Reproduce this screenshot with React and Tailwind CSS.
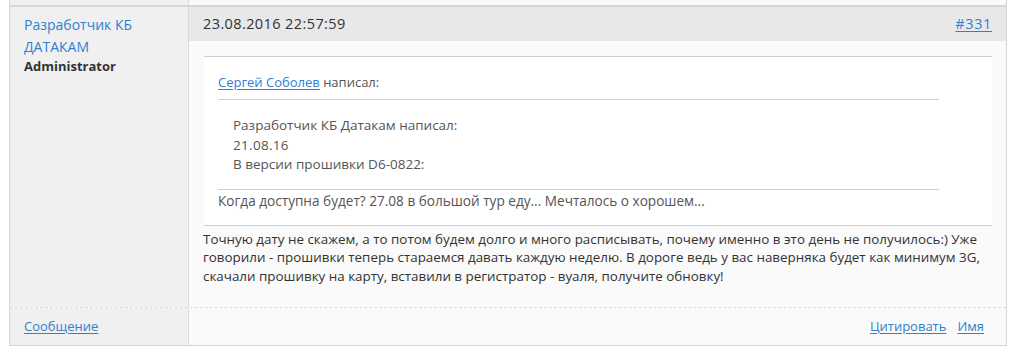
export default function App() {
  const link = 'text-[#2f80d1] underline underline-offset-2';
  return (
    <div className="w-[1016px] h-[346px] overflow-hidden bg-white pl-[9px] font-['Open_Sans',sans-serif] text-[13.4px] text-[#333]">
      <div className="w-[998px] border-x border-b border-[#d6d6d6]">
        {/* tail of previous post */}
        <div className="flex h-[7px] border-b-2 border-[#d6d6d6]">
          <div className="w-[179px] border-r border-[#dcdcdc] bg-[#f0f0f0]" />
          <div className="flex-1 bg-[#fafafa]" />
        </div>

        {/* post */}
        <div className="flex">
          <div className="w-[179px] border-r border-[#dcdcdc] bg-[#f0f0f0] px-[14px] pt-[7px]">
            <div className="text-[14px] leading-[22px] text-[#2f80d1]">
              Разработчик КБ ДАТАКАМ
            </div>
            <div className="-mt-[1px] text-[13px] font-bold text-[#333]">Administrator</div>
          </div>

          <div className="flex-1 bg-[#fafafa]">
            <div className="flex h-[34px] items-center justify-between bg-[#e8e8e8] px-[14px]">
              <span className="text-[14.5px] tracking-[0.4px] text-[#333]">23.08.2016 22:57:59</span>
              <a className={`${link} text-[14.5px] tracking-[0.6px]`}>#331</a>
            </div>

            <div className="px-[14px] pt-[15px] pb-[6px]">
              <div className="ml-px border-y border-[#cfcfcf] bg-white pl-[14px]">
                <div className="pt-[16px] pb-[8px] text-[13px] leading-[18px] text-[#555]">
                  <a className={link}>Сергей Соболев</a> написал:
                </div>
                <div className="mr-[53px] border-y border-[#cfcfcf] pl-[15px] pt-[16px] pb-[14px] text-[13.5px] leading-[19.5px] text-[#555]">
                  <div>Разработчик КБ Датакам написал:</div>
                  <div className="tracking-[0.3px]">21.08.16</div>
                  <div>В версии прошивки D6-0822:</div>
                </div>
                <div className="pt-[2px] pb-[15px] text-[13.6px] leading-[18px] text-[#555]">
                  Когда доступна будет? 27.08 в большой тур еду... Мечталось о хорошем...
                </div>
              </div>
              <p className="mt-[4px] pb-[16px] leading-[18.5px] text-[#333]">
                Точную дату не скажем, а то потом будем долго и много расписывать, почему именно в это день не получилось:) Уже говорили - прошивки теперь стараемся давать каждую неделю. В дороге ведь у вас наверняка будет как минимум 3G, скачали прошивку на карту, вставили в регистратор - вуаля, получите обновку!
              </p>
            </div>
          </div>
        </div>

        {/* footer */}
        <div className="flex h-[38px] border-t border-dashed border-[#dcdcdc] text-[13px]">
          <div className="flex w-[179px] items-center border-r border-[#dcdcdc] bg-[#f0f0f0] px-[14px]">
            <a className={link}>Сообщение</a>
          </div>
          <div className="flex flex-1 items-center justify-end gap-[11px] bg-[#fafafa] px-[22px]">
            <a className={link}>Цитировать</a>
            <a className={link}>Имя</a>
          </div>
        </div>
      </div>
    </div>
  );
}
